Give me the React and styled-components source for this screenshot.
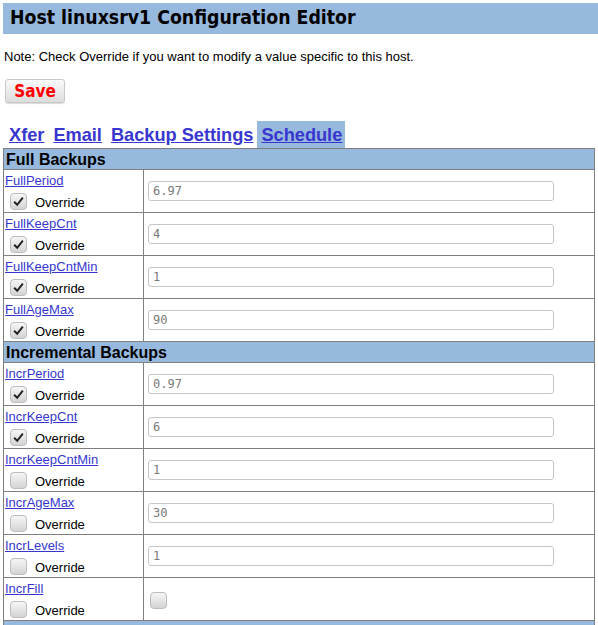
import React from 'react';
import styled, {createGlobalStyle} from 'styled-components';

const GlobalStyle = createGlobalStyle`
  body {
    margin: 0;
    padding: 3px 0 0 3px;
    background: #fff;
    font-family: "Liberation Sans", Arial, sans-serif;
    color: #000;
  }
`;

const Header = styled.h1`
  margin: 0;
  background: #97b9dd;
  font-family: "DejaVu Sans Condensed", "DejaVu Sans", sans-serif;
  font-stretch: condensed;
  font-size: 19.3px;
  font-weight: bold;
  color: #000;
  padding: 3px 7px 4px;
  height: 24px;
  line-height: 24px;
`;

const Note = styled.div`
  font-size: 13px;
  margin: 15px 0 0 1px;
`;

const SaveButton = styled.button`
  margin: 15px 0 0 2px;
  width: 60px;
  height: 24px;
  padding: 0;
  border: 1px solid #c8c8c8;
  border-radius: 3px;
  background: linear-gradient(#fafafa, #dcdcdc);
  box-shadow: 0 1px 1px rgba(0, 0, 0, 0.15);
  color: #f00;
  font-family: "DejaVu Sans Condensed", "DejaVu Sans", sans-serif;
  font-stretch: condensed;
  font-weight: bold;
  font-size: 17px;
`;

const Tabs = styled.div`
  display: flex;
  align-items: flex-end;
  gap: 5px;
  margin-top: 18px;
  padding-left: 4px;
`;

const Tab = styled.a`
  font-size: 18.2px;
  font-weight: bold;
  color: #3737cf;
  text-decoration: underline;
  padding: ${p => (p.$active ? '3px 3px 1px 4px' : '3px 2px 1px')};
  margin-left: ${p => (p.$active ? '-3px' : '0')};
  background: ${p => (p.$active ? '#97b9dd' : 'transparent')};
  line-height: 23px;
`;

const Table = styled.table`
  border-collapse: collapse;
  width: 592px;
  border: 1px solid #7f7f7f;
`;

const SectionCell = styled.td`
  background: #97b9dd;
  font-weight: bold;
  font-size: 16px;
  padding: 1px 2px;
  height: 18px;
  line-height: 17px;
  border: 1px solid #7f7f7f;
`;

const NameCell = styled.td`
  width: 137px;
  height: 39px;
  padding: 3px 1px 0;
  vertical-align: top;
  border: 1px solid #7f7f7f;
  font-size: 13px;
  line-height: 15px;
`;

const ValueCell = styled.td`
  padding: 0 4px;
  border: 1px solid #7f7f7f;
  vertical-align: middle;
`;

const NameLink = styled.a`
  color: #3737cf;
  text-decoration: underline;
  display: block;
`;

const OverrideRow = styled.label`
  display: flex;
  align-items: center;
  gap: 8px;
  margin: 6px 0 0 5px;
  height: 17px;
`;

const Box = styled.span`
  width: 17px;
  height: 17px;
  border: 1px solid #bdbdbd;
  border-radius: 4px;
  background: linear-gradient(#f6f6f6, #d4d4d4);
  display: inline-flex;
  align-items: center;
  justify-content: center;
  box-sizing: border-box;
  position: relative;
  top: ${p => (p.$inValue ? '3px' : '-1px')};
  left: ${p => (p.$inValue ? '2px' : '0')};
`;

const ValueInput = styled.div`
  width: 406px;
  height: 20px;
  box-sizing: border-box;
  border: 1px solid #c6c6c6;
  border-radius: 3px;
  font-family: "DejaVu Sans Mono", monospace;
  font-size: 12px;
  color: #7a7a7a;
  padding: 2px 4px;
  line-height: 14px;
  background: #fff;
`;

const Check = ({checked, inValue}) => (
  <Box $inValue={inValue}>
    {checked && (
      <svg width="13" height="13" viewBox="0 0 12 12">
        <path d="M2 6.2 L4.8 9 L10 2.5" fill="none" stroke="#222" strokeWidth="1.8" />
      </svg>
    )}
  </Box>
);

const sections = [
  {
    title: 'Full Backups',
    rows: [
      ['FullPeriod', '6.97', true],
      ['FullKeepCnt', '4', true],
      ['FullKeepCntMin', '1', true],
      ['FullAgeMax', '90', true],
    ],
  },
  {
    title: 'Incremental Backups',
    rows: [
      ['IncrPeriod', '0.97', true],
      ['IncrKeepCnt', '6', true],
      ['IncrKeepCntMin', '1', false],
      ['IncrAgeMax', '30', false],
      ['IncrLevels', '1', false],
      ['IncrFill', null, false],
    ],
  },
  {title: '', rows: []},
];

export default function App() {
  return (
    <>
      <GlobalStyle />
      <Header>Host linuxsrv1 Configuration Editor</Header>
      <Note>Note: Check Override if you want to modify a value specific to this host.</Note>
      <SaveButton>Save</SaveButton>
      <Tabs>
        <Tab href="#">Xfer</Tab>
        <Tab href="#">Email</Tab>
        <Tab href="#">Backup Settings</Tab>
        <Tab href="#" $active>Schedule</Tab>
      </Tabs>
      <Table>
        <tbody>
          {sections.map(s => (
            <React.Fragment key={s.title}>
              <tr>
                <SectionCell colSpan={2}>{s.title}</SectionCell>
              </tr>
              {s.rows.map(([name, value, over]) => (
                <tr key={name}>
                  <NameCell>
                    <NameLink href="#">{name}</NameLink>
                    <OverrideRow>
                      <Check checked={over} />
                      Override
                    </OverrideRow>
                  </NameCell>
                  <ValueCell>
                    {value === null ? <Check checked={false} inValue /> : <ValueInput>{value}</ValueInput>}
                  </ValueCell>
                </tr>
              ))}
            </React.Fragment>
          ))}
        </tbody>
      </Table>
    </>
  );
}
